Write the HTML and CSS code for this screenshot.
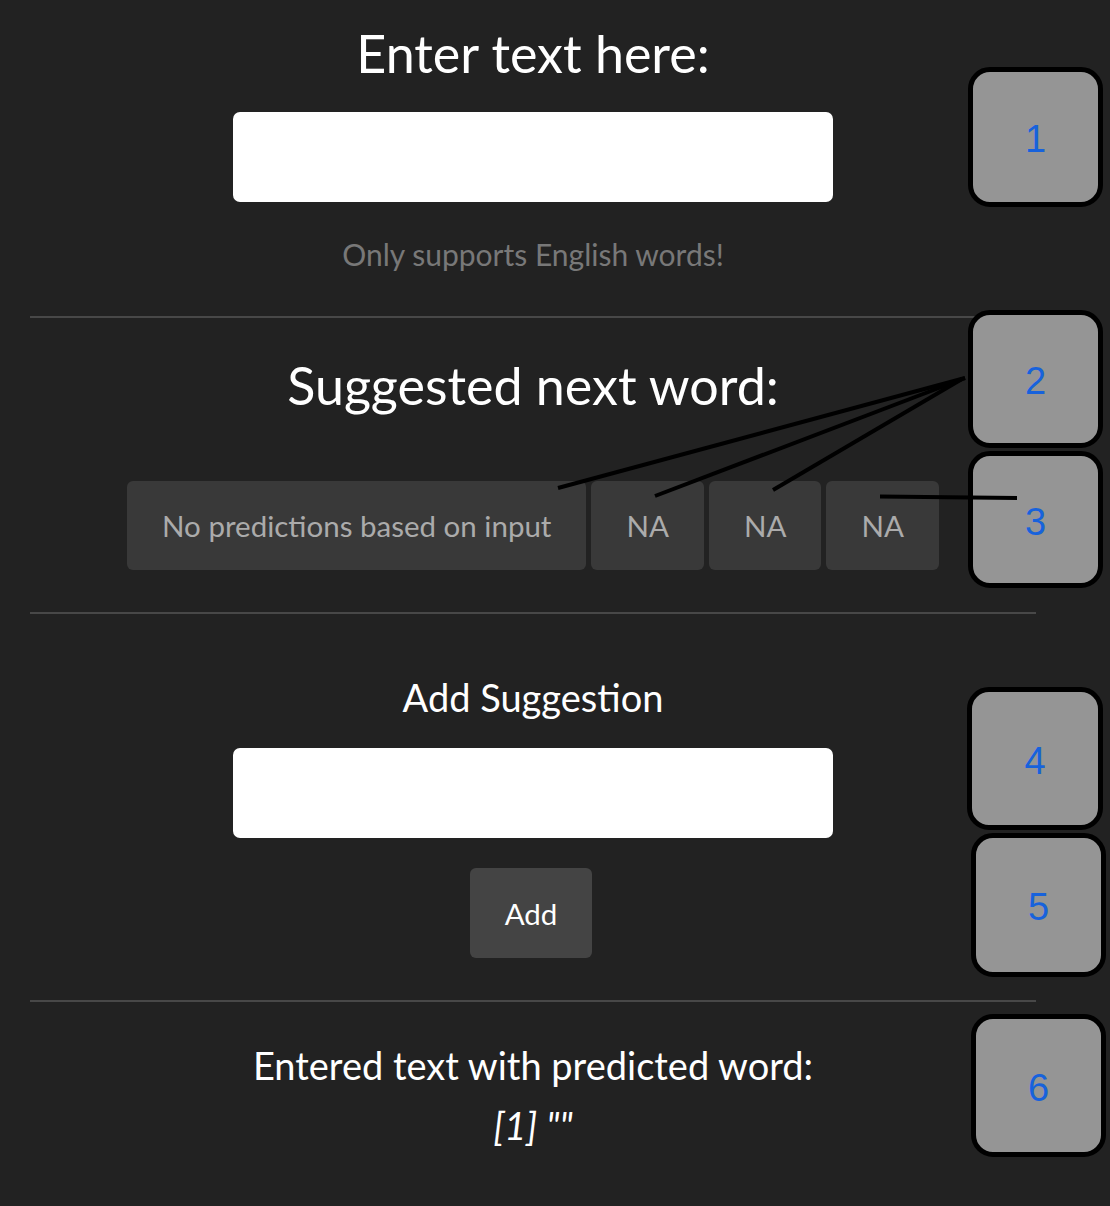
FILE: index.html
```html
<!DOCTYPE html>
<html>
<head>
<meta charset="utf-8">
<link rel="stylesheet" href="styles.css">
</head>
<body>
<div class="page">
  <main class="main">
    <section class="sec sec-1">
      <h1 class="title">Enter text here:</h1>
      <div class="field"></div>
      <p class="note">Only supports English words!</p>
    </section>
    <hr class="rule rule-1">
    <section class="sec sec-2">
      <h2 class="title title-2">Suggested next word:</h2>
      <div class="choices">
        <div class="choice">No predictions based on input</div>
        <div class="choice">NA</div>
        <div class="choice">NA</div>
        <div class="choice">NA</div>
      </div>
    </section>
    <hr class="rule rule-2">
    <section class="sec sec-3">
      <h3 class="sub">Add Suggestion</h3>
      <div class="field field-2"></div>
      <div class="add-row"><div class="add-btn">Add</div></div>
    </section>
    <hr class="rule rule-3">
    <section class="sec sec-4">
      <h3 class="sub sub-4">Entered text with predicted word:</h3>
      <p class="result">[1] ""</p>
    </section>
  </main>

  <div class="badge b1">1</div>
  <div class="badge b2">2</div>
  <div class="badge b3">3</div>
  <div class="badge b4">4</div>
  <div class="badge b5">5</div>
  <div class="badge b6">6</div>

  <svg class="links" width="1110" height="1206" viewBox="0 0 1110 1206">
    <line x1="558" y1="488" x2="965" y2="378"/>
    <line x1="655" y1="496" x2="965" y2="378"/>
    <line x1="773" y1="490" x2="962" y2="379"/>
    <line x1="880" y1="496.5" x2="1017" y2="498"/>
  </svg>
</div>
</body>
</html>
```

FILE: styles.css
```css
html, body {
  margin: 0;
  padding: 0;
  background: #222222;
}
body {
  font-family: Lato, "Open Sans", sans-serif;
  color: #ffffff;
}
.page {
  position: relative;
  width: 1110px;
  height: 1206px;
  overflow: hidden;
}
.main {
  width: 1006px;
  margin-left: 30px;
  display: flex;
  flex-direction: column;
  align-items: stretch;
}
.sec {
  display: flex;
  flex-direction: column;
  align-items: center;
}
.title {
  margin: 23px 0 0;
  font-size: 52px;
  line-height: 60px;
  font-weight: 400;
  text-align: center;
}
.title-2 {
  margin-top: 37px;
}
.field {
  width: 600px;
  height: 90px;
  background: #ffffff;
  border-radius: 7px;
  margin-top: 29px;
}
.note {
  margin: 32px 0 0;
  font-size: 30px;
  line-height: 40px;
  color: #787878;
}
.rule {
  border: 0;
  height: 2px;
  background: #484848;
  margin: 0;
  width: 100%;
}
.rule-1 { margin-top: 42px; }
.rule-2 { margin-top: 42px; }
.rule-3 { margin-top: 42px; }
.choices {
  display: flex;
  gap: 5px;
  margin-top: 66px;
}
.choice {
  height: 89px;
  display: flex;
  align-items: center;
  padding: 0 35px;
  background: #393939;
  border-radius: 6px;
  color: #ababab;
  font-size: 29.5px;
}
.sub {
  margin: 61px 0 0;
  font-size: 38px;
  line-height: 44px;
  font-weight: 400;
  text-align: center;
}
.sub-4 { margin-top: 41px; }
.field-2 { margin-top: 29px; }
.add-row {
  margin-top: 30px;
  display: flex;
  justify-content: center;
  padding-right: 4px;
}
.add-btn {
  height: 90px;
  display: flex;
  align-items: center;
  padding: 0 35px;
  background: #444444;
  border-radius: 6px;
  color: #ffffff;
  font-size: 29.5px;
}
.result {
  margin: 16px 0 0;
  font-size: 38px;
  line-height: 44px;
  font-style: italic;
}
.badge {
  position: absolute;
  box-sizing: border-box;
  width: 135px;
  height: 139px;
  border: 5px solid #000000;
  border-radius: 22px;
  background: #959595;
  color: #1762dc;
  font-family: "Liberation Sans", Arial, sans-serif;
  font-size: 38px;
  padding-top: 5px;
  display: flex;
  align-items: center;
  justify-content: center;
}
.b1 { left: 968px; top: 67px; height: 140px; }
.b2 { left: 968px; top: 310px; height: 138px; }
.b3 { left: 968px; top: 451px; height: 137px; }
.b4 { left: 967px; top: 687px; width: 136px; height: 143px; }
.b5 { left: 971px; top: 833px; height: 144px; }
.b6 { left: 971px; top: 1014px; height: 143px; }
.links {
  position: absolute;
  left: 0;
  top: 0;
  pointer-events: none;
}
.links line {
  stroke: #000000;
  stroke-width: 4;
}
```
